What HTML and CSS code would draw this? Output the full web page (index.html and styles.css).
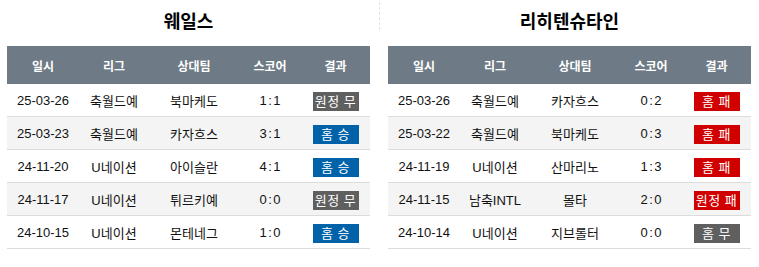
FILE: index.html
```html
<!DOCTYPE html>
<html lang="ko">
<head>
<meta charset="utf-8">
<link rel="stylesheet" href="styles.css">
</head>
<body>
<div class="wrap">
  <section class="panel">
    <h2 class="title">웨일스</h2>
    <table class="tbl">
      <colgroup><col class="c1"><col class="c2"><col class="c3"><col class="c4"><col class="c5"></colgroup>
      <thead><tr><th>일시</th><th>리그</th><th>상대팀</th><th>스코어</th><th>결과</th></tr></thead>
      <tbody>
        <tr><td>25-03-26</td><td>축월드예</td><td>북마케도</td><td class="score">1:1</td><td><span class="badge draw">원정 무</span></td></tr>
        <tr class="alt"><td>25-03-23</td><td>축월드예</td><td>카자흐스</td><td class="score">3:1</td><td><span class="badge win">홈 승</span></td></tr>
        <tr><td>24-11-20</td><td>U네이션</td><td>아이슬란</td><td class="score">4:1</td><td><span class="badge win">홈 승</span></td></tr>
        <tr class="alt"><td>24-11-17</td><td>U네이션</td><td>튀르키예</td><td class="score">0:0</td><td><span class="badge draw">원정 무</span></td></tr>
        <tr><td>24-10-15</td><td>U네이션</td><td>몬테네그</td><td class="score">1:0</td><td><span class="badge win">홈 승</span></td></tr>
      </tbody>
    </table>
  </section>
  <section class="panel right">
    <h2 class="title">리히텐슈타인</h2>
    <table class="tbl">
      <colgroup><col class="c1"><col class="c2"><col class="c3"><col class="c4"><col class="c5"></colgroup>
      <thead><tr><th>일시</th><th>리그</th><th>상대팀</th><th>스코어</th><th>결과</th></tr></thead>
      <tbody>
        <tr><td>25-03-26</td><td>축월드예</td><td>카자흐스</td><td class="score">0:2</td><td><span class="badge lose">홈 패</span></td></tr>
        <tr class="alt"><td>25-03-22</td><td>축월드예</td><td>북마케도</td><td class="score">0:3</td><td><span class="badge lose">홈 패</span></td></tr>
        <tr><td>24-11-19</td><td>U네이션</td><td>산마리노</td><td class="score">1:3</td><td><span class="badge lose">홈 패</span></td></tr>
        <tr class="alt"><td>24-11-15</td><td>남축INTL</td><td>몰타</td><td class="score">2:0</td><td><span class="badge lose">원정 패</span></td></tr>
        <tr><td>24-10-14</td><td>U네이션</td><td>지브롤터</td><td class="score">0:0</td><td><span class="badge draw">홈 무</span></td></tr>
      </tbody>
    </table>
  </section>
</div>
</body>
</html>
```
FILE: styles.css
```css
html, body {
  margin: 0;
  padding: 0;
  background: #fff;
}
body {
  font-family: "Liberation Sans", Arial, "Noto Sans CJK KR", sans-serif;
  color: #111;
}
.wrap {
  display: grid;
  grid-template-columns: 363px 363px;
  column-gap: 18px;
  padding-left: 7px;
  position: relative;
}
.panel.right { position: relative; }
.panel.right::before {
  content: "";
  position: absolute;
  left: -9px;
  top: 2px;
  height: 28px;
  border-left: 1px dashed #e2e2e2;
}
.title {
  margin: 0;
  padding-top: 8px;
  height: 38px;
  line-height: 24px;
  font-size: 18px;
  font-weight: bold;
  text-align: center;
  color: #000;
  font-family: "Noto Sans CJK KR", sans-serif;
}
.tbl {
  width: 363px;
  border-collapse: collapse;
  table-layout: fixed;
}
.c1 { width: 72px; }
.c2 { width: 70px; }
.c3 { width: 90px; }
.c4 { width: 62px; }
.c5 { width: 69px; }
.tbl th {
  background: #6e7b86;
  color: #fff;
  height: 38px;
  padding: 0;
  font-size: 12px;
  font-weight: bold;
  text-align: center;
  font-family: "Noto Sans CJK KR", sans-serif;
}
.tbl td {
  height: 32px;
  padding: 0;
  font-size: 13px;
  text-align: center;
  border-bottom: 1px solid #dcdcdc;
  color: #111;
}
.tbl td.score {
  letter-spacing: 1.5px;
  padding-left: 1.5px;
}
.tbl tr.alt td { background: #f4f4f4; }
.badge {
  display: inline-block;
  width: 46px;
  height: 19px;
  line-height: 19px;
  margin-top: 2px;
  color: #fff;
  font-size: 13px;
  text-align: center;
  vertical-align: middle;
  letter-spacing: 0.5px;
}
.badge.draw { background: #5f5f5f; }
.badge.win { background: #0062a8; }
.badge.lose { background: #d10000; }
```
